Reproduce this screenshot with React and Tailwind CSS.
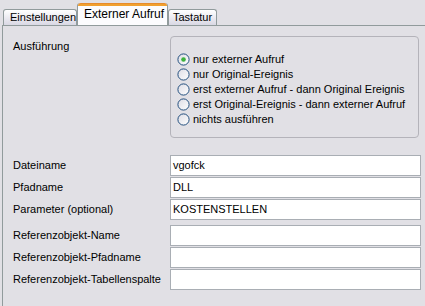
import { useState } from "react";

const fields = [
  { label: "Dateiname", value: "vgofck" },
  { label: "Pfadname", value: "DLL" },
  { label: "Parameter (optional)", value: "KOSTENSTELLEN" },
];

const refFields = [
  { label: "Referenzobjekt-Name", value: "" },
  { label: "Referenzobjekt-Pfadname", value: "" },
  { label: "Referenzobjekt-Tabellenspalte", value: "" },
];

const options = [
  "nur externer Aufruf",
  "nur Original-Ereignis",
  "erst externer Aufruf - dann Original Ereignis",
  "erst Original-Ereignis - dann externer Aufruf",
  "nichts ausführen",
];

function Radio({ checked }) {
  return (
    <svg width="13" height="13" viewBox="0 0 13 13" className="shrink-0">
      <defs>
        <linearGradient id="rg" x1="0" y1="0" x2="1" y2="1">
          <stop offset="0" stopColor="#dcdce4" />
          <stop offset="1" stopColor="#ffffff" />
        </linearGradient>
      </defs>
      <circle cx="6.5" cy="6.5" r="5.6" fill="url(#rg)" stroke="#24507e" strokeWidth="1" />
      {checked && <circle cx="6.5" cy="6.5" r="2.3" fill="#3cb23c" />}
    </svg>
  );
}

function Field({ label, value }) {
  return (
    <div className="flex items-center h-[21px]">
      <div className="w-[167px] shrink-0 pl-[10px] whitespace-nowrap">{label}</div>
      <div className="w-[251px] h-[21px] border border-[#a9aeb4] bg-white px-[2px] leading-[19px]">
        {value}
      </div>
    </div>
  );
}

export default function App() {
  const [selected, setSelected] = useState(0);

  return (
    <div
      className="w-[425px] h-[306px] overflow-hidden bg-[#e1e0e5] text-[11px] text-black"
      style={{ fontFamily: '"Liberation Sans", Arial, sans-serif' }}
    >
      <div className="flex items-end h-[25px] pl-[3px]">
        <div className="h-[16px] w-[74px] border border-b-0 border-[#919b9c] rounded-t-[3px] bg-gradient-to-b from-white to-[#d9d8e4] pl-[6px] leading-[15px]">
          Einstellungen
        </div>
        <div className="h-[22px] w-[91px] border-x border-[#919b9c] rounded-t-[3px] bg-[#fcfcfe] flex flex-col">
          <div className="h-[3px] rounded-t-[3px] bg-[#f0a030] border-t border-[#e68b2c]" />
          <div className="pl-[6px] leading-[16px] text-[12px]">Externer Aufruf</div>
        </div>
        <div className="h-[16px] w-[49px] border border-b-0 border-[#919b9c] rounded-t-[3px] bg-gradient-to-b from-white to-[#d9d8e4] pl-[4px] leading-[15px]">
          Tastatur
        </div>
      </div>

      <div className="border-t border-l border-[#919b9c] ml-[2px] h-[281px] pt-[10px]">
        <div className="flex">
          <div className="w-[167px] shrink-0 pl-[10px] pt-[2px]">Ausführung</div>
          <div className="w-[249px] h-[102px] border border-[#b4b3ba] rounded-[4px] pl-[6px] pt-[15px]">
            {options.map((o, i) => (
              <div
                key={o}
                className="flex items-center gap-[3px] h-[15px] cursor-default"
                onClick={() => setSelected(i)}
              >
                <Radio checked={selected === i} />
                <span>{o}</span>
              </div>
            ))}
          </div>
        </div>

        <div className="mt-[17px] flex flex-col gap-[1px]">
          {fields.map((f) => (
            <Field key={f.label} {...f} />
          ))}
        </div>

        <div className="mt-[5px] flex flex-col gap-[1px]">
          {refFields.map((f) => (
            <Field key={f.label} {...f} />
          ))}
        </div>
      </div>
    </div>
  );
}
